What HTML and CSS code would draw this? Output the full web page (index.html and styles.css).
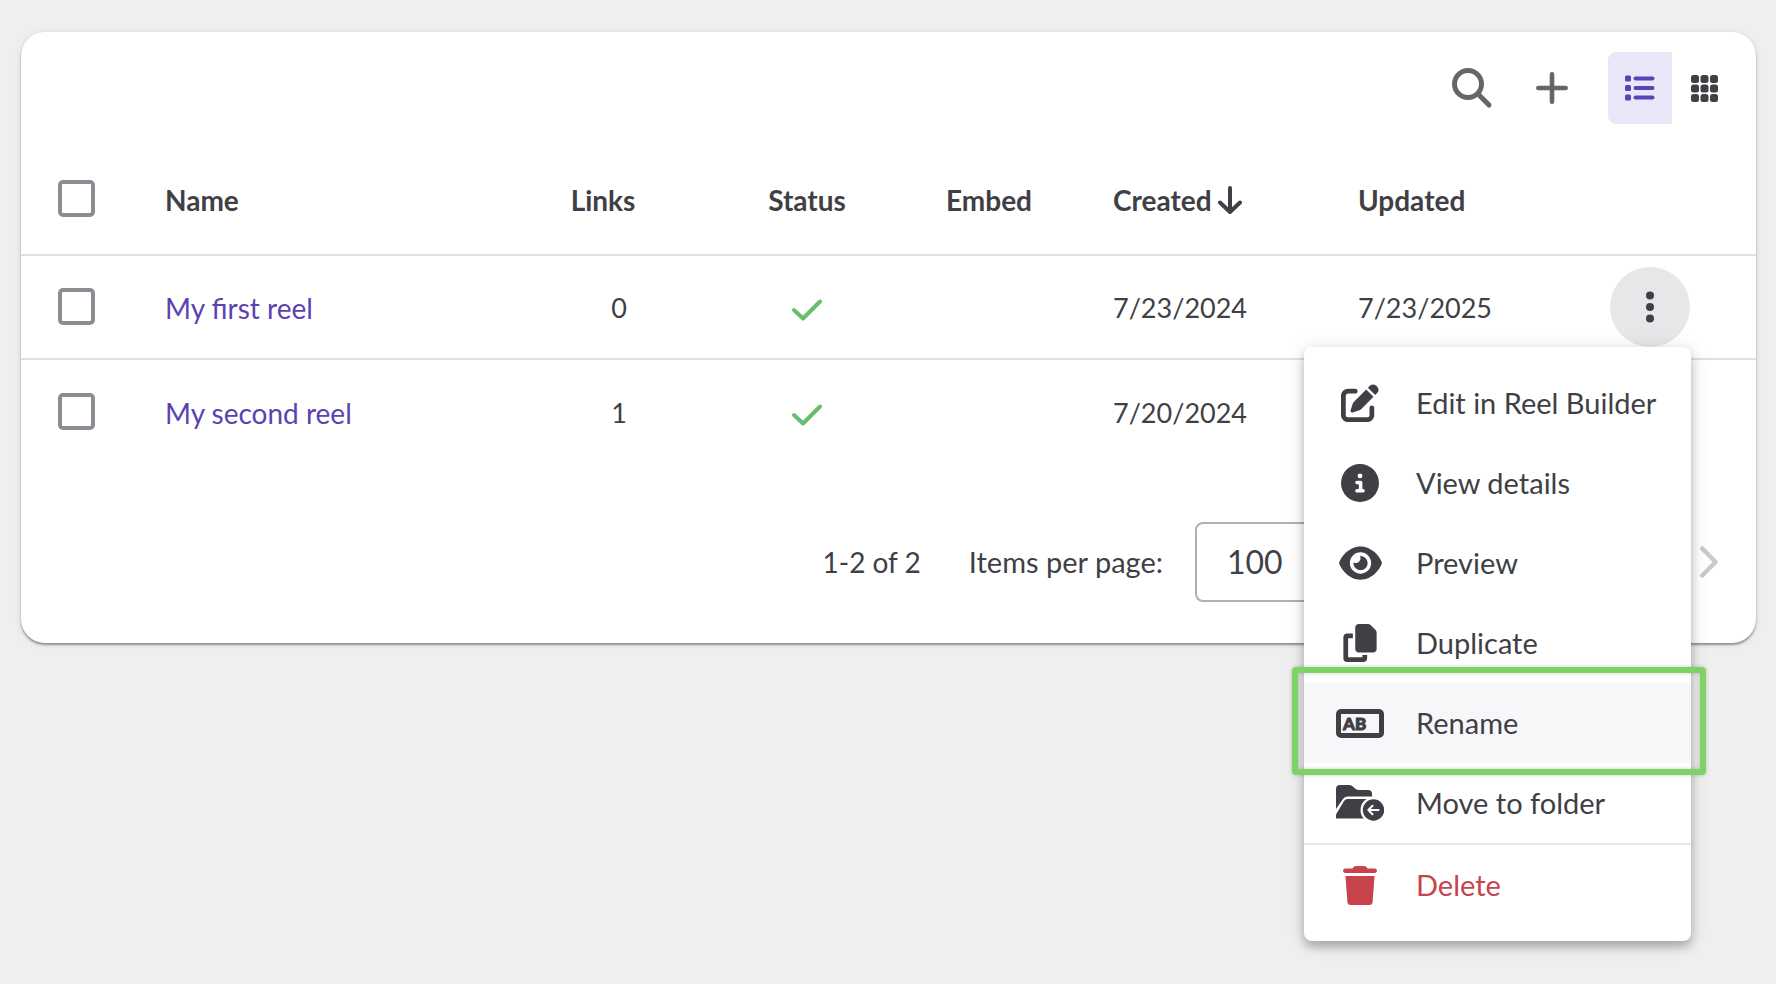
FILE: index.html
```html
<!DOCTYPE html>
<html lang="en">
    <head>
        <meta charset="utf-8">
        <title>Reels</title>
        <link rel="stylesheet" href="styles.css">
    </head>
    <body>
        <main class="card">
            <div class="toolbar">
                <button class="icon-btn" aria-label="Search">
                    <svg width="42" height="42" viewBox="0 0 42 42" fill="none" stroke="currentColor" stroke-width="5" stroke-linecap="round">
                        <circle cx="17" cy="17" r="13.5" />
                        <path d="M27 27L38 38" />
                    </svg>
                </button>
                <button class="icon-btn" aria-label="Add">
                    <svg width="32" height="32" viewBox="0 0 32 32" fill="none" stroke="currentColor" stroke-width="4.6" stroke-linecap="round">
                        <path d="M16 2.3V29.7M2.3 16H29.7" />
                    </svg>
                </button>
                <div class="view-toggle">
                    <button class="view-btn active" aria-label="List view">
                        <svg width="30" height="26" viewBox="0 0 30 26" fill="currentColor">
                            <rect x="0" y="0.5" width="6" height="6" rx="1.5" />
                            <rect x="0" y="10" width="6" height="6" rx="1.5" />
                            <rect x="0" y="19.5" width="6" height="6" rx="1.5" />
                            <rect x="8.5" y="1.5" width="21" height="4" rx="2" />
                            <rect x="8.5" y="11" width="21" height="4" rx="2" />
                            <rect x="8.5" y="20.5" width="21" height="4" rx="2" />
                        </svg>
                    </button>
                    <button class="view-btn" aria-label="Grid view">
                        <svg width="27" height="27" viewBox="0 0 27 27" fill="currentColor">
                            <rect x="0" y="0" width="8" height="8" rx="2.5" />
                            <rect x="9.5" y="0" width="8" height="8" rx="2.5" />
                            <rect x="19" y="0" width="8" height="8" rx="2.5" />
                            <rect x="0" y="9.5" width="8" height="8" rx="2.5" />
                            <rect x="9.5" y="9.5" width="8" height="8" rx="2.5" />
                            <rect x="19" y="9.5" width="8" height="8" rx="2.5" />
                            <rect x="0" y="19" width="8" height="8" rx="2.5" />
                            <rect x="9.5" y="19" width="8" height="8" rx="2.5" />
                            <rect x="19" y="19" width="8" height="8" rx="2.5" />
                        </svg>
                    </button>
                </div>
            </div>

            <table class="reels">
                <colgroup>
                    <col class="col-check">
                    <col>
                    <col class="col-links">
                    <col class="col-status">
                    <col class="col-embed">
                    <col class="col-date">
                    <col class="col-date">
                    <col class="col-actions">
                </colgroup>
                <thead>
                    <tr>
                        <th class="check"><input type="checkbox" aria-label="Select all"></th>
                        <th>Name</th>
                        <th class="center">Links</th>
                        <th class="center">Status</th>
                        <th>Embed</th>
                        <th>
                            <span class="sorted">Created
                                <svg width="24" height="29" viewBox="0 0 24 29" fill="none" stroke="currentColor" stroke-width="4" stroke-linecap="round" stroke-linejoin="round">
                                    <path d="M12 2V26M2 16.5L12 26L22 16.5" />
                                </svg>
                            </span>
                        </th>
                        <th>Updated</th>
                        <th class="actions-cell"></th>
                    </tr>
                </thead>
                <tbody>
                    <tr>
                        <td class="check"><input type="checkbox" aria-label="Select My first reel"></td>
                        <td><a href="#">My first reel</a></td>
                        <td class="center number">0</td>
                        <td class="center">
                            <svg class="tick" width="30" height="22" viewBox="0 0 30 22"><path d="M2 11L11 19.5L28 2.5" /></svg>
                        </td>
                        <td></td>
                        <td class="date">7/23/2024</td>
                        <td class="date">7/23/2025</td>
                        <td class="actions-cell">
                            <div class="actions">
                                <button class="kebab" aria-label="More actions">
                                    <svg width="8" height="32" viewBox="0 0 8 32" fill="currentColor">
                                        <circle cx="4" cy="4.5" r="4" />
                                        <circle cx="4" cy="16" r="4" />
                                        <circle cx="4" cy="27.5" r="4" />
                                    </svg>
                                </button>
                                <ul class="menu">
                                    <li>
                                        <button class="menu-item">
                                            <span class="menu-icon">
                                                <svg width="38" height="38" viewBox="0 0 512 512" fill="currentColor"><path d="M471.6 21.7c-21.9-21.9-57.3-21.9-79.2 0L362.3 51.7l97.9 97.9 30.1-30.1c21.9-21.9 21.9-57.3 0-79.2L471.6 21.7zm-299.2 220c-6.1 6.1-10.8 13.6-13.5 21.9l-29.6 88.8c-2.9 8.6-.6 18.1 5.8 24.6s15.9 8.7 24.6 5.8l88.8-29.6c8.2-2.7 15.7-7.4 21.9-13.5L437.7 172.3 339.7 74.3 172.4 241.7zM96 64C43 64 0 107 0 160V416c0 53 43 96 96 96H352c53 0 96-43 96-96V320c0-17.7-14.3-32-32-32s-32 14.3-32 32v96c0 17.7-14.3 32-32 32H96c-17.7 0-32-14.3-32-32V160c0-17.7 14.3-32 32-32h96c17.7 0 32-14.3 32-32s-14.3-32-32-32H96z" /></svg>
                                            </span>
                                            Edit in Reel Builder
                                        </button>
                                    </li>
                                    <li>
                                        <button class="menu-item">
                                            <span class="menu-icon">
                                                <svg width="38" height="38" viewBox="0 0 512 512" fill="currentColor"><path d="M256 512A256 256 0 1 0 256 0a256 256 0 1 0 0 512zM216 336h24V272H216c-13.3 0-24-10.7-24-24s10.7-24 24-24h48c13.3 0 24 10.7 24 24v88h8c13.3 0 24 10.7 24 24s-10.7 24-24 24H216c-13.3 0-24-10.7-24-24s10.7-24 24-24zm40-208a32 32 0 1 1 0 64 32 32 0 1 1 0-64z" /></svg>
                                            </span>
                                            View details
                                        </button>
                                    </li>
                                    <li>
                                        <button class="menu-item">
                                            <span class="menu-icon">
                                                <svg width="43" height="38" viewBox="0 0 576 512" fill="currentColor"><path d="M288 32c-80.8 0-145.5 36.8-192.6 80.6C48.6 156 17.3 208 2.5 243.7c-3.3 7.9-3.3 16.7 0 24.6C17.3 304 48.6 356 95.4 399.4C142.5 443.2 207.2 480 288 480s145.5-36.8 192.6-80.6c46.8-43.5 78.1-95.4 93-131.1c3.3-7.9 3.3-16.7 0-24.6c-14.9-35.7-46.2-87.7-93-131.1C433.5 68.8 368.8 32 288 32zM144 256a144 144 0 1 1 288 0 144 144 0 1 1 -288 0zm144-64c0 35.3-28.7 64-64 64c-7.1 0-13.9-1.2-20.3-3.3c-5.5-1.8-11.9 1.6-11.7 7.4c.3 6.9 1.3 13.8 3.2 20.7c13.7 51.2 66.4 81.6 117.6 67.9s81.6-66.4 67.9-117.6c-11.1-41.5-47.8-69.4-88.6-71.1c-5.8-.2-9.2 6.1-7.4 11.7c2.1 6.4 3.3 13.2 3.3 20.3z" /></svg>
                                            </span>
                                            Preview
                                        </button>
                                    </li>
                                    <li>
                                        <button class="menu-item">
                                            <span class="menu-icon">
                                                <svg width="34" height="38" viewBox="0 0 448 512" fill="currentColor"><path d="M208 0H332.1c12.7 0 24.9 5.1 33.9 14.1l67.9 67.9c9 9 14.1 21.2 14.1 33.9V336c0 26.5-21.5 48-48 48H208c-26.5 0-48-21.5-48-48V48c0-26.5 21.5-48 48-48zM48 128h80v64H64V448H256V416h64v48c0 26.5-21.5 48-48 48H48c-26.5 0-48-21.5-48-48V176c0-26.5 21.5-48 48-48z" /></svg>
                                            </span>
                                            Duplicate
                                        </button>
                                    </li>
                                    <li class="highlighted">
                                        <button class="menu-item hovered">
                                            <span class="menu-icon">
                                                <svg width="48" height="29" viewBox="0 0 48 29">
                                                    <rect class="field" x="2.5" y="2.5" width="43" height="24" rx="2.5" />
                                                    <text class="field-text" x="7" y="20.5">AB</text>
                                                </svg>
                                            </span>
                                            Rename
                                        </button>
                                    </li>
                                    <li>
                                        <button class="menu-item">
                                            <span class="menu-icon">
                                                <svg width="48" height="36" viewBox="0 0 48 36" fill="currentColor">
                                                    <path d="M0 24V4Q0 0 4 0H13Q15 0 16.5 1.3L19 3.5Q21 5 23 5H32Q36 5 36 9V11.5H11.5Q8.5 11.5 7 14Z" />
                                                    <path d="M0 33.5V29.5L8 16Q9.2 14 11.5 14H36V33.5Z" />
                                                    <circle cx="37.5" cy="25" r="13" fill="#fff" />
                                                    <circle cx="37.5" cy="25" r="10.7" />
                                                    <path d="M42.5 25H32.5M36.5 20.8L32.3 25L36.5 29.2" fill="none" stroke="#fff" stroke-width="2" stroke-linecap="round" stroke-linejoin="round" />
                                                </svg>
                                            </span>
                                            Move to folder
                                        </button>
                                    </li>
                                    <li class="separated">
                                        <button class="menu-item danger">
                                            <span class="menu-icon">
                                                <svg width="34" height="39" viewBox="0 0 34 39" fill="currentColor">
                                                    <path d="M2 2.5H9.5Q10.5 0 12.5 0H21.5Q23.5 0 24.5 2.5H32Q34 2.7 34 4.8T32 7H2Q0 6.9 0 4.8T2 2.5Z" />
                                                    <path d="M2.5 10H31.5L29.6 36Q29.3 39 26.5 39H7.5Q4.7 39 4.4 36Z" />
                                                </svg>
                                            </span>
                                            Delete
                                        </button>
                                    </li>
                                </ul>
                            </div>
                        </td>
                    </tr>
                    <tr>
                        <td class="check"><input type="checkbox" aria-label="Select My second reel"></td>
                        <td><a href="#">My second reel</a></td>
                        <td class="center number">1</td>
                        <td class="center">
                            <svg class="tick" width="30" height="22" viewBox="0 0 30 22"><path d="M2 11L11 19.5L28 2.5" /></svg>
                        </td>
                        <td></td>
                        <td class="date">7/20/2024</td>
                        <td></td>
                        <td class="actions-cell"></td>
                    </tr>
                </tbody>
            </table>

            <div class="pagination">
                <span class="range">1-2 of 2</span>
                <label for="per-page">Items per page:</label>
                <select id="per-page">
                    <option>100</option>
                </select>
                <button class="page-btn" aria-label="Next page" disabled>
                    <svg width="18" height="32" viewBox="0 0 18 32" fill="none" stroke="currentColor" stroke-width="4.5" stroke-linecap="round" stroke-linejoin="round">
                        <path d="M2.3 2.5L15.5 16L2.3 29.5" />
                    </svg>
                </button>
            </div>
        </main>
    </body>
</html>
```

FILE: styles.css
```css
* {
    box-sizing: border-box;
}
body {
    min-height: 100vh;
    margin: 0;
    padding: 32px 20px 32px 21px;
    background-color: #efefef;
    color: #403f46;
    font-family: Lato, sans-serif;
    font-size: 28px;
    line-height: 40px;
}
button {
    display: flex;
    align-items: center;
    justify-content: center;
    padding: 0;
    border: none;
    background: none;
    color: inherit;
    font: inherit;
    cursor: pointer;
}
.card {
    background-color: #fff;
    border-radius: 24px;
    box-shadow: 0 2px 2px rgba(0, 0, 0, 0.35), 0 1px 6px rgba(60, 60, 90, 0.14);
}

/* toolbar */
.toolbar {
    display: flex;
    justify-content: flex-end;
    align-items: center;
    height: 112px;
    padding: 0 20px;
}
.icon-btn {
    width: 80px;
    height: 80px;
    color: #666;
}
.view-toggle {
    display: flex;
    margin-left: 16px;
}
.view-btn {
    width: 64px;
    height: 72px;
    border-radius: 0 8px 8px 0;
}
.view-btn.active {
    border-radius: 8px 0 0 8px;
    background-color: #eae7f8;
    color: #5b42b9;
}

/* table */
.reels {
    width: 100%;
    table-layout: fixed;
    border-collapse: separate;
    border-spacing: 0;
}
.col-check {
    width: 120px;
}
.col-links {
    width: 178px;
}
.col-status {
    width: 230px;
}
.col-embed {
    width: 167px;
}
.col-date {
    width: 245px;
}
.col-actions {
    width: 177px;
}
th,
td {
    height: 104px;
    padding: 2px 24px 0;
    text-align: left;
}
th {
    height: 112px;
    font-weight: 700;
}
th,
tbody tr:first-child td {
    border-bottom: 2px solid #e0e0e0;
}
.center {
    text-align: center;
}
.number {
    padding-left: 56px;
    font-size: 27px;
}
.date {
    font-size: 27px;
}
.check {
    padding: 0 0 2px 37px;
}
.actions-cell {
    padding-top: 0;
}
.reels input {
    appearance: none;
    display: block;
    width: 37px;
    height: 37px;
    margin: 0;
    border: 4px solid #8e8c92;
    border-radius: 5px;
}
.reels a {
    color: #5b42b3;
    text-decoration: none;
}
.sorted {
    display: flex;
    align-items: center;
    gap: 6px;
}
.tick {
    display: block;
    margin: 4px auto 0;
    fill: none;
    stroke: #69bd6c;
    stroke-width: 4;
    stroke-linecap: round;
    stroke-linejoin: round;
}

/* row actions */
.actions {
    position: relative;
    width: 82px;
}
.kebab {
    width: 80px;
    height: 80px;
    margin-left: 7px;
    border-radius: 50%;
    background-color: #e7e7e9;
}
.menu {
    position: absolute;
    z-index: 1;
    top: 100%;
    right: -6px;
    width: 387px;
    margin: 0;
    padding: 16px 0;
    list-style: none;
    background-color: #fff;
    border-radius: 8px;
    box-shadow: 0 6px 10px rgba(0, 0, 0, 0.24), 0 2px 20px rgba(0, 0, 0, 0.12);
}
.menu-item {
    justify-content: flex-start;
    gap: 32px;
    width: 100%;
    height: 80px;
    padding: 0 0 0 32px;
    font-size: 29px;
    white-space: nowrap;
}
.menu-item.hovered {
    background-color: #f7f7fa;
}
.menu-item.danger {
    color: #c8434e;
}
.menu-icon {
    display: flex;
    justify-content: center;
    width: 48px;
}
.separated {
    border-top: 2px solid #e6e8e8;
}
.field {
    fill: none;
    stroke: currentColor;
    stroke-width: 5;
}
.field-text {
    fill: currentColor;
    stroke: currentColor;
    stroke-width: 1;
    font-size: 17px;
    font-weight: 900;
}
.highlighted {
    position: relative;
}
.highlighted::after {
    content: "";
    position: absolute;
    top: -16px;
    right: -15px;
    bottom: -12px;
    left: -12px;
    border: 6px solid #7dd364;
    border-radius: 4px;
    box-shadow: 0 0 4px rgba(0, 0, 0, 0.2), inset 0 0 4px rgba(0, 0, 0, 0.2);
    pointer-events: none;
}

/* pagination */
.pagination {
    display: flex;
    align-items: center;
    justify-content: flex-end;
    padding: 58px 14px 41px;
}
.range {
    margin-right: 48px;
}
.pagination label {
    margin-right: 32px;
    font-size: 29px;
}
.pagination select {
    appearance: none;
    width: 240px;
    height: 80px;
    margin-right: 241px;
    padding: 0 30px;
    border: 2px solid #b0b0b2;
    border-radius: 8px;
    background-color: #fff;
    color: inherit;
    font: inherit;
    font-size: 32px;
}
.page-btn {
    width: 66px;
    height: 80px;
    color: #cacacc;
}
```
